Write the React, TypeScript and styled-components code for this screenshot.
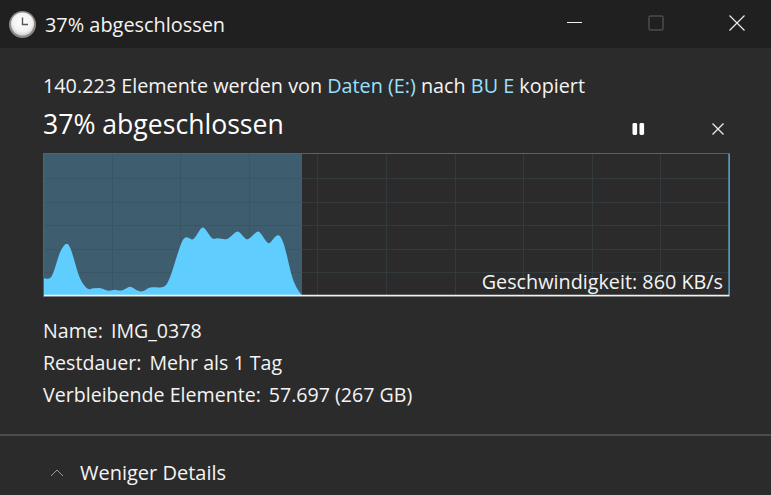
import React from 'react';
import styled, { createGlobalStyle } from 'styled-components';

const Global = createGlobalStyle`
  html, body { margin: 0; padding: 0; background: #2b2b2b; }
  body { font-family: "Open Sans", "Noto Sans", "Liberation Sans", sans-serif; color: #fff; }
`;

const Win = styled.div`
  width: 771px;
  height: 495px;
  display: flex;
  flex-direction: column;
  overflow: hidden;
  background: #2b2b2b;
`;

const TitleBar = styled.header`
  height: 48px;
  flex: none;
  background: #202020;
  display: flex;
  align-items: center;
  padding-left: 8px;
`;

const TitleText = styled.span`
  margin-left: 8px;
  font-size: 19.9px;
  color: #f4f4f4;
`;

const WinButtons = styled.div`
  margin-left: auto;
  margin-right: -7px;
  display: flex;
  align-items: center;
`;

const WinButton = styled.div`
  width: 81.5px;
  height: 45px;
  padding-bottom: 3px;
  display: flex;
  align-items: center;
  justify-content: center;
`;

const Body = styled.main`
  flex: 1;
  padding: 0 41px 0 43px;
  display: flex;
  flex-direction: column;
`;

const CopyLine = styled.div`
  margin-top: 25px;
  height: 26px;
  line-height: 26px;
  font-size: 19.8px;
  color: #f4f4f4;
  white-space: nowrap;
`;

const Link = styled.span`
  color: #99e0ff;
`;

const HeadRow = styled.div`
  margin-top: 5px;
  height: 40px;
  display: flex;
  align-items: center;
`;

const Heading = styled.h1`
  margin: 0;
  font-size: 26.6px;
  font-weight: 400;
  color: #fff;
`;

const HeadButtons = styled.div`
  margin-left: auto;
  display: flex;
  align-items: center;
  gap: 67px;
  padding: 9px 6px 0 0;
`;

const Chart = styled.div`
  position: relative;
  margin-top: 9px;
  height: 145px;
  width: 687px;
`;

const Graph = styled.svg`
  display: block;
`;

const Speed = styled.span`
  position: absolute;
  right: 7px;
  bottom: 4px;
  font-size: 19.8px;
  line-height: 24px;
  color: #f4f4f4;
  white-space: nowrap;
`;

const Details = styled.dl`
  margin: 17px 0 0;
  display: flex;
  flex-direction: column;
`;

const DetailRow = styled.div`
  height: 32px;
  line-height: 32px;
  font-size: 19.6px;
  color: #f4f4f4;
  display: flex;
  gap: 8px;
  white-space: nowrap;
`;

const Term = styled.dt`
  margin: 0;
`;

const Value = styled.dd`
  margin: 0;
`;

const Footer = styled.footer`
  height: 61px;
  flex: none;
  border-top: 2px solid #4c4c4c;
  display: flex;
  align-items: center;
  padding: 14px 0 0 50px;
  box-sizing: border-box;
  font-size: 20px;
  color: #f4f4f4;
`;

const Toggle = styled.span`
  margin-left: 16px;
`;

// traced off a 3x crop of the reference, mapped to chart px below
const trace: [number, number][] = [
  [42, 385], [60, 387], [70, 370], [85, 320], [95, 295], [108, 279], [118, 285], [130, 320], [145, 375],
  [160, 405], [175, 419], [185, 416], [200, 414], [215, 414], [235, 424], [255, 418], [270, 423],
  [285, 418], [302, 407], [320, 423], [340, 425], [355, 413], [375, 411], [385, 413], [405, 411],
  [420, 385], [440, 320], [455, 275], [465, 261], [475, 262], [487, 271], [497, 260], [515, 230],
  [525, 235], [540, 258], [550, 268], [562, 264], [585, 269], [597, 265], [620, 242], [632, 249],
  [648, 270], [660, 265], [682, 242], [692, 249], [712, 280], [722, 279], [735, 258], [750, 254],
  [765, 290], [785, 380], [800, 415], [815, 435],
];
const samples = trace.map(([x, y]): [number, number] => [x / 3 - 13, y / 3 - 3]);

function smoothArea(pts: [number, number][], baseY: number) {
  let d = `M${pts[0][0]} ${baseY} L${pts[0][0]} ${pts[0][1]}`;
  for (let i = 0; i < pts.length - 1; i++) {
    const [x, y] = pts[i];
    const [nx, ny] = pts[i + 1];
    d += ` Q${x} ${y} ${(x + nx) / 2} ${(y + ny) / 2}`;
  }
  const last = pts[pts.length - 1];
  return `${d} L${last[0]} ${last[1]} L${last[0]} ${baseY} Z`;
}

const gridX = [69.5, 137.5, 206.5, 274.5, 343.5, 412.5, 480.5, 549.5, 617.5];
const gridY = [25.5, 49.5, 72.5, 96.5, 119.5];

function SpeedGraph() {
  return (
    <Graph width={687} height={145} viewBox="0 0 687 145">
      <rect x={1} y={1} width={258} height={142} fill="#3e5d6e" />
      {gridX.map((x) => (
        <line key={x} x1={x} x2={x} y1={1} y2={142} stroke={x < 259 ? '#3a5665' : '#323a3e'} strokeWidth={1} />
      ))}
      {gridY.map((y) => (
        <React.Fragment key={y}>
          <line x1={1} x2={259} y1={y} y2={y} stroke="#3a5665" strokeWidth={1} />
          <line x1={259} x2={685} y1={y} y2={y} stroke="#323a3e" strokeWidth={1} />
        </React.Fragment>
      ))}
      <path d={smoothArea(samples, 142)} fill="#60cdff" />
      <rect x={0.5} y={0.5} width={686} height={143} fill="none" stroke="#5f5f5f" />
      <line x1={686} x2={686} y1={1} y2={143} stroke="#60cdff" strokeWidth={1} />
      <line x1={1} x2={686} y1={142.5} y2={142.5} stroke="#f2f2f2" strokeWidth={1.6} />
    </Graph>
  );
}

function ClockIcon() {
  return (
    <svg width="29" height="29" viewBox="0 0 29 29">
      <defs>
        <radialGradient id="face" cx="50%" cy="42%" r="60%">
          <stop offset="0%" stopColor="#ffffff" />
          <stop offset="70%" stopColor="#f2f2f2" />
          <stop offset="100%" stopColor="#c9c9c9" />
        </radialGradient>
      </defs>
      <circle cx="14.5" cy="14.5" r="13.5" fill="#8a8a86" />
      <circle cx="14.5" cy="14" r="11.5" fill="url(#face)" />
      <path d="M14.5 7.5V14.5H20" fill="none" stroke="#555" strokeWidth="1.4" />
    </svg>
  );
}

export default function App() {
  return (
    <Win>
      <Global />
      <TitleBar>
        <ClockIcon />
        <TitleText>37% abgeschlossen</TitleText>
        <WinButtons>
          <WinButton>
            <svg width="15" height="3" viewBox="0 0 15 3"><path d="M0 1.5H15" stroke="#f2f2f2" strokeWidth="1" /></svg>
          </WinButton>
          <WinButton>
            <svg width="16" height="16" viewBox="0 0 16 16"><rect x="1" y="1" width="14" height="14" rx="1.5" fill="none" stroke="#4b4b4b" strokeWidth="1.5" /></svg>
          </WinButton>
          <WinButton>
            <svg width="16" height="16" viewBox="0 0 16 16"><path d="M0.5 0.5L15.5 15.5M15.5 0.5L0.5 15.5" stroke="#f2f2f2" strokeWidth="1.1" /></svg>
          </WinButton>
        </WinButtons>
      </TitleBar>
      <Body>
        <CopyLine>
          140.223 Elemente werden von <Link>Daten (E:)</Link> nach <Link>BU E</Link> kopiert
        </CopyLine>
        <HeadRow>
          <Heading>37% abgeschlossen</Heading>
          <HeadButtons>
            <svg width="13" height="12" viewBox="0 0 13 12">
              <rect x="0.5" y="0" width="4.6" height="12" rx="1.4" fill="#fff" />
              <rect x="7.5" y="0" width="4.6" height="12" rx="1.4" fill="#fff" />
            </svg>
            <svg width="12" height="12" viewBox="0 0 12 12"><path d="M0.5 0.5L11.5 11.5M11.5 0.5L0.5 11.5" stroke="#ececec" strokeWidth="1.3" /></svg>
          </HeadButtons>
        </HeadRow>
        <Chart>
          <SpeedGraph />
          <Speed>Geschwindigkeit: 860 KB/s</Speed>
        </Chart>
        <Details>
          <DetailRow><Term>Name:</Term><Value>IMG_0378</Value></DetailRow>
          <DetailRow><Term>Restdauer:</Term><Value>Mehr als 1 Tag</Value></DetailRow>
          <DetailRow><Term>Verbleibende Elemente:</Term><Value>57.697 (267 GB)</Value></DetailRow>
        </Details>
      </Body>
      <Footer>
        <svg width="14" height="8" viewBox="0 0 14 8"><path d="M1 7L7 1L13 7" fill="none" stroke="#9a9a9a" strokeWidth="1" /></svg>
        <Toggle>Weniger Details</Toggle>
      </Footer>
    </Win>
  );
}
